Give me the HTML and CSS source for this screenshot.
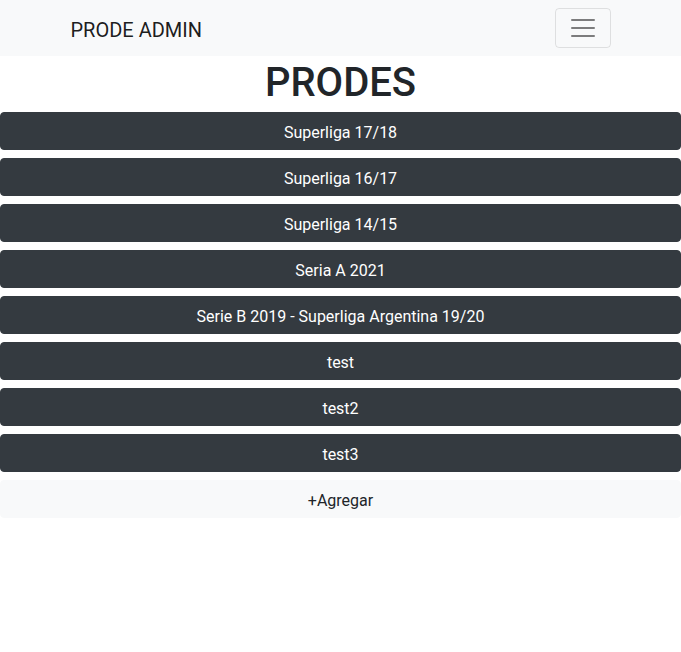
FILE: index.html
```html
<!DOCTYPE html>
<html lang="es">
<head>
<meta charset="utf-8">
<title>PRODE ADMIN</title>
<link rel="stylesheet" href="styles.css">
</head>
<body>
<nav class="navbar">
  <div class="container nav-inner">
    <a class="brand" href="#">PRODE ADMIN</a>
    <button class="toggler" type="button" aria-label="Toggle navigation">
      <svg class="toggler-icon" width="30" height="30" viewBox="0 0 30 30" aria-hidden="true">
        <path stroke="rgba(0,0,0,0.5)" stroke-linecap="round" stroke-miterlimit="10" stroke-width="2" d="M4 7h22M4 15h22M4 23h22"/>
      </svg>
    </button>
  </div>
</nav>
<main>
  <h1 class="title">PRODES</h1>
  <div class="list">
    <button class="btn btn-dark">Superliga 17/18</button>
    <button class="btn btn-dark">Superliga 16/17</button>
    <button class="btn btn-dark">Superliga 14/15</button>
    <button class="btn btn-dark">Seria A 2021</button>
    <button class="btn btn-dark">Serie B 2019 - Superliga Argentina 19/20</button>
    <button class="btn btn-dark">test</button>
    <button class="btn btn-dark">test2</button>
    <button class="btn btn-dark">test3</button>
    <button class="btn btn-light">+Agregar</button>
  </div>
</main>
</body>
</html>
```
FILE: styles.css
```css
* { box-sizing: border-box; }
html, body { margin: 0; padding: 0; }
body {
  font-family: Roboto, "Liberation Sans", sans-serif;
  font-size: 16px;
  line-height: 1.5;
  color: #212529;
  background: #fff;
}
.navbar {
  background: #f8f9fa;
  padding: 8px 16px;
}
.container {
  max-width: 540px;
  margin: 0 auto;
}
.nav-inner {
  display: flex;
  align-items: center;
  justify-content: space-between;
}
.brand {
  font-size: 20px;
  line-height: 30px;
  padding: 7px 0 3px;
  color: rgba(0,0,0,0.9);
  text-decoration: none;
  white-space: nowrap;
}
.toggler {
  display: flex;
  align-items: center;
  justify-content: center;
  width: 56px;
  height: 40px;
  padding: 4px 12px;
  background: transparent;
  border: 1px solid rgba(0,0,0,0.1);
  border-radius: 4px;
}
.toggler-icon { display: block; }
.title {
  margin: 0 0 5px;
  padding-top: 3px;
  text-align: center;
  font-size: 40px;
  font-weight: 500;
  line-height: 48px;
}
.list {
  display: flex;
  flex-direction: column;
  gap: 8px;
}
.btn {
  display: block;
  width: 100%;
  font-family: inherit;
  font-size: 16px;
  line-height: 24px;
  padding: 8px 12px 4px;
  border: 1px solid transparent;
  border-radius: 4px;
  text-align: center;
  cursor: pointer;
}
.btn-dark {
  background: #343a40;
  border-color: #343a40;
  color: #fff;
}
.btn-light {
  background: #f8f9fa;
  border-color: #f8f9fa;
  color: #212529;
}
```
